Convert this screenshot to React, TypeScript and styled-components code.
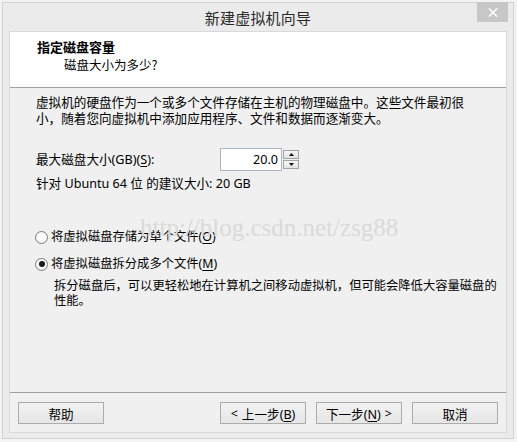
import React from 'react';
import styled, { createGlobalStyle } from 'styled-components';

const Global = createGlobalStyle`
  html, body {
    margin: 0;
    padding: 0;
    background: #f3f3f3;
  }
  body {
    font-family: "Noto Sans", "Noto Sans CJK SC", sans-serif;
    color: #000;
  }
`;

const Window = styled.div`
  margin: 2px 0 0 2px;
  width: 512px;
  height: 437px;
  box-sizing: border-box;
  background: #ebebeb;
  border: 1px solid #d2d2d2;
  display: flex;
  flex-direction: column;
`;

const TitleBar = styled.div`
  height: 28px;
  display: grid;
  grid-template-columns: 1fr auto 1fr;
  align-items: center;
`;

const Title = styled.div`
  grid-column: 2;
  font-size: 15px;
  color: #2a2a2a;
  font-family: "Noto Sans CJK SC", sans-serif;
  letter-spacing: 0.2px;
`;

const CloseButton = styled.div`
  grid-column: 3;
  justify-self: end;
  align-self: start;
  margin: -1px 5px 0 0;
  width: 31px;
  height: 20px;
  background: #c7c7c7;
  display: flex;
  align-items: center;
  justify-content: center;
`;

const Client = styled.div`
  flex: 1;
  margin: 0 6px 5px 6px;
  border: 1px solid #d9d9d9;
  display: flex;
  flex-direction: column;
  background: #f0f0f0;
`;

const Header = styled.div`
  height: 56px;
  background: #fff;
  border-bottom: 1px solid #a0a0a0;
  padding: 7px 0 0 27px;
  box-sizing: border-box;
`;

const Headline = styled.div`
  font-family: "Noto Sans CJK SC", sans-serif;
  font-weight: 700;
  font-size: 13px;
  line-height: 16px;
`;

const Subline = styled.div`
  font-family: "Noto Sans CJK SC", sans-serif;
  font-size: 12.5px;
  line-height: 16px;
  margin: 2px 0 0 27px;
`;

const Body = styled.div`
  position: relative;
  flex: 1;
  padding: 7px 0 0 26px;
  font-size: 12.6px;
  display: flex;
  flex-direction: column;
`;

const Paragraph = styled.div`
  line-height: 16px;
  white-space: nowrap;
`;

const Line = styled.div``;

const SizeRow = styled.div`
  margin-top: 21px;
  display: grid;
  grid-template-columns: 184px auto;
  align-items: center;
`;

const Label = styled.div`
  line-height: 16px;
`;

const Spinner = styled.div`
  display: flex;
  align-items: center;
  gap: 1px;
`;

const NumberBox = styled.div`
  width: 62px;
  height: 23px;
  box-sizing: border-box;
  border: 1px solid #a9b6c9;
  background: #fff;
  font-size: 12.6px;
  display: flex;
  align-items: center;
  justify-content: flex-end;
  padding-right: 3px;
`;

const SpinColumn = styled.div`
  display: flex;
  flex-direction: column;
  gap: 1px;
`;

const SpinButton = styled.div`
  width: 16px;
  height: 9px;
  box-sizing: border-box;
  border: 1px solid #a3a3a3;
  background: linear-gradient(#f6f6f6, #e3e3e3);
  display: flex;
  align-items: center;
  justify-content: center;
`;

const Note = styled.div`
  margin-top: 5px;
  line-height: 16px;
`;

const RadioRow = styled.div<{ $gap: number }>`
  margin-top: ${(p) => p.$gap}px;
  display: flex;
  align-items: center;
  gap: 3px;
  line-height: 16px;
  font-size: 12.3px;
  margin-left: -1px;
`;

const RadioDot = styled.span<{ $on?: boolean }>`
  width: 13px;
  height: 13px;
  box-sizing: border-box;
  border-radius: 50%;
  border: 1px solid #7b7b7b;
  background: radial-gradient(circle at 50% 40%, #ffffff 0%, #f0f0f0 100%);
  display: inline-flex;
  align-items: center;
  justify-content: center;
  &::after {
    content: '';
    display: ${(p) => (p.$on ? 'block' : 'none')};
    width: 6px;
    height: 6px;
    border-radius: 50%;
    background: #1a1a1a;
  }
`;

const Detail = styled.div`
  margin: 6px 0 0 18px;
  line-height: 15px;
  font-size: 12.3px;
  white-space: nowrap;
`;

const Watermark = styled.div`
  position: absolute;
  left: 130px;
  top: 127px;
  font-family: "Liberation Serif", "DejaVu Serif", serif;
  font-size: 25px;
  line-height: 1;
  color: #dadada;
  pointer-events: none;
`;

const Footer = styled.div`
  border-top: 1px solid #a0a0a0;
  padding: 9px 8px 8px 8px;
  display: flex;
  justify-content: space-between;
`;

const ButtonGroup = styled.div`
  display: flex;
  gap: 10px;
`;

const Button = styled.div`
  width: 86px;
  height: 22px;
  box-sizing: border-box;
  border: 1px solid #acacac;
  background: linear-gradient(#f2f2f2, #e6e6e6);
  font-size: 12.6px;
  display: flex;
  align-items: center;
  justify-content: center;
  gap: 4px;
`;

const Key = styled.u`
  text-underline-offset: 2px;
`;

const Arrow = ({ up }: { up?: boolean }) => (
  <svg width="5" height="3" viewBox="0 0 5 3">
    <polygon points={up ? '2.5,0 5,3 0,3' : '0,0 5,0 2.5,3'} fill="#111" />
  </svg>
);

export default function App() {
  return (
    <>
      <Global />
      <Window>
        <TitleBar>
          <Title>新建虚拟机向导</Title>
          <CloseButton>
            <svg width="10" height="9" viewBox="0 0 10 9">
              <path d="M1 0.5 L9 8.5 M9 0.5 L1 8.5" stroke="#fff" strokeWidth="1.6" />
            </svg>
          </CloseButton>
        </TitleBar>
        <Client>
          <Header>
            <Headline>指定磁盘容量</Headline>
            <Subline>磁盘大小为多少?</Subline>
          </Header>
          <Body>
            <Paragraph>
              <Line>虚拟机的硬盘作为一个或多个文件存储在主机的物理磁盘中。这些文件最初很</Line>
              <Line>小，随着您向虚拟机中添加应用程序、文件和数据而逐渐变大。</Line>
            </Paragraph>
            <SizeRow>
              <Label>
                最大磁盘大小(GB)(<Key>S</Key>):
              </Label>
              <Spinner>
                <NumberBox>20.0</NumberBox>
                <SpinColumn>
                  <SpinButton>
                    <Arrow up />
                  </SpinButton>
                  <SpinButton>
                    <Arrow />
                  </SpinButton>
                </SpinColumn>
              </Spinner>
            </SizeRow>
            <Note>针对 Ubuntu 64 位 的建议大小: 20 GB</Note>
            <RadioRow $gap={37}>
              <RadioDot />
              <span>
                将虚拟磁盘存储为单个文件(<Key>O</Key>)
              </span>
            </RadioRow>
            <RadioRow $gap={11}>
              <RadioDot $on />
              <span>
                将虚拟磁盘拆分成多个文件(<Key>M</Key>)
              </span>
            </RadioRow>
            <Detail>
              <Line>拆分磁盘后，可以更轻松地在计算机之间移动虚拟机，但可能会降低大容量磁盘的</Line>
              <Line>性能。</Line>
            </Detail>
            <Watermark>http://blog.csdn.net/zsg88</Watermark>
          </Body>
          <Footer>
            <Button>帮助</Button>
            <ButtonGroup>
              <Button>
                <span>&lt;</span>
                <span>
                  上一步(<Key>B</Key>)
                </span>
              </Button>
              <Button>
                <span>
                  下一步(<Key>N</Key>)
                </span>
                <span>&gt;</span>
              </Button>
              <Button>取消</Button>
            </ButtonGroup>
          </Footer>
        </Client>
      </Window>
    </>
  );
}
